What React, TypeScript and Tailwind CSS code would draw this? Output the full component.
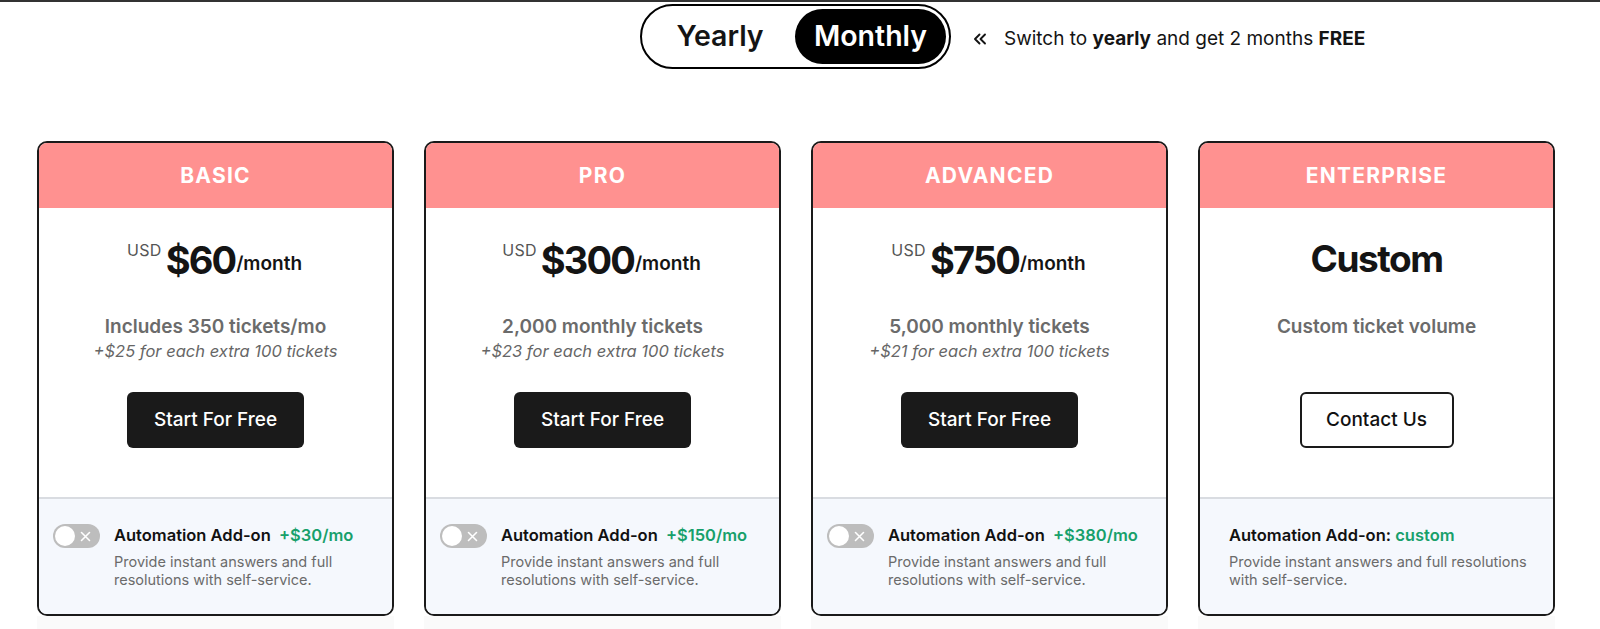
import React from "react";

type Plan = {
  name: string;
  price?: string;
  tickets: string;
  extra?: string;
  addon: string;
  custom?: boolean;
};

const plans: Plan[] = [
  { name: "BASIC", price: "$60", tickets: "Includes 350 tickets/mo", extra: "+$25 for each extra 100 tickets", addon: "+$30/mo" },
  { name: "PRO", price: "$300", tickets: "2,000 monthly tickets", extra: "+$23 for each extra 100 tickets", addon: "+$150/mo" },
  { name: "ADVANCED", price: "$750", tickets: "5,000 monthly tickets", extra: "+$21 for each extra 100 tickets", addon: "+$380/mo" },
  { name: "ENTERPRISE", tickets: "Custom ticket volume", addon: "custom", custom: true },
];

function Toggle() {
  return (
    <div className="relative w-[47px] h-[24px] rounded-full bg-[#bdbdbd] shrink-0">
      <div className="absolute left-[2px] top-[2px] w-[20px] h-[20px] rounded-full bg-white" />
      <svg className="absolute right-[9px] top-[6.5px]" width="11" height="11" viewBox="0 0 11 11">
        <path d="M1.5 1.5 L9.5 9.5 M9.5 1.5 L1.5 9.5" stroke="white" strokeWidth="1.6" strokeLinecap="round" />
      </svg>
    </div>
  );
}

function Card({ p }: { p: Plan }) {
  return (
    <div className="w-[357px] flex flex-col">
      <div className="h-[475px] border-2 border-[#1a1a1a] rounded-[10px] overflow-hidden flex flex-col bg-white">
        <div className="h-[65px] shrink-0 bg-[#ff9190] flex items-center justify-center text-white text-[21px] font-bold tracking-[0.06em]">
          {p.name}
        </div>
        <div className="h-[289px] shrink-0 flex flex-col items-center pt-[26px]">
          {p.custom ? (
            <div className="h-[50px] flex items-center text-[37px] font-bold tracking-[-0.04em] text-[#141414]">Custom</div>
          ) : (
            <div className="h-[50px] flex items-end text-[#141414] -ml-[2px]">
              <span className="text-[16px] tracking-[0.02em] text-[#555] self-start mt-[4px] mr-[4px]">USD</span>
              <span className="text-[38px] leading-[48px] font-bold tracking-[-0.05em]">{p.price}</span>
              <span className="text-[19px] font-semibold mb-[6px] ml-[1px]">/month</span>
            </div>
          )}
          <div className="mt-[30px] text-[19px] leading-[26px] font-semibold text-[#6b6b6b]">{p.tickets}</div>
          {p.extra ? (
            <div className="text-[16.5px] leading-[22px] italic text-[#666]">{p.extra}</div>
          ) : (
            <div className="h-[22px]" />
          )}
          {p.custom ? (
            <div className="mt-[30px] w-[154px] h-[56px] rounded-[6px] border-2 border-[#1a1a1a] flex items-center justify-center text-[19px] font-medium text-[#111]">
              Contact Us
            </div>
          ) : (
            <div className="mt-[30px] w-[177px] h-[56px] rounded-[6px] bg-[#1a1a1a] flex items-center justify-center text-[19px] font-medium text-white">
              Start For Free
            </div>
          )}
        </div>
        <div className="flex-1 border-t-2 border-[#d9dce1] bg-[#f5f8fd]">
          {p.custom ? (
            <div className="pl-[29px] pt-[25px]">
              <div className="text-[16.5px] leading-[22px] font-semibold text-[#111]">
                Automation Add-on: <span className="text-[#17a06b]">custom</span>
              </div>
              <div className="mt-[7px] text-[14.5px] leading-[18px] text-[#6b6b6b] w-[310px]">
                Provide instant answers and full resolutions with self-service.
              </div>
            </div>
          ) : (
            <div className="pl-[14px] pt-[25px] flex gap-[14px]">
              <Toggle />
              <div>
                <div className="text-[16.5px] leading-[22px] font-semibold text-[#111]">
                  Automation Add-on <span className="ml-[4px] text-[#17a06b]">{p.addon}</span>
                </div>
                <div className="mt-[7px] text-[14.5px] leading-[18px] text-[#6b6b6b] w-[235px]">
                  Provide instant answers and full resolutions with self-service.
                </div>
              </div>
            </div>
          )}
        </div>
      </div>
      <div className="h-[40px] bg-[#fafafa]" />
    </div>
  );
}

export default function App() {
  return (
    <div className="w-[1600px] h-[629px] overflow-hidden bg-white border-t-2 border-[#333]" style={{ fontFamily: "Inter, 'Noto Sans', sans-serif" }}>
      <div className="flex items-center pl-[640px] pt-[2px]">
        <div className="w-[311px] h-[65px] rounded-full border-2 border-black flex items-center p-[3px]">
          <div className="flex-1 flex items-center justify-center text-[28.5px] font-semibold text-[#141414]">Yearly</div>
          <div className="w-[151px] h-[55px] rounded-full bg-black flex items-center justify-center text-[28.5px] font-semibold text-white">
            Monthly
          </div>
        </div>
        <div className="ml-[21px] mt-[5px] flex items-center text-[19px] text-[#141414]">
          <svg width="16" height="16" viewBox="0 0 16 16" className="mr-[16px]">
            <path d="M7.5 3.5 L3 8 L7.5 12.5 M13 3.5 L8.5 8 L13 12.5" fill="none" stroke="#141414" strokeWidth="1.9" strokeLinecap="round" strokeLinejoin="round" />
          </svg>
          <span>
            Switch to <b className="font-bold">yearly</b> and get 2 months <b className="font-bold">FREE</b>
          </span>
        </div>
      </div>
      <div className="flex gap-[30px] pl-[37px] mt-[72px]">
        {plans.map((p) => (
          <Card key={p.name} p={p} />
        ))}
      </div>
    </div>
  );
}
